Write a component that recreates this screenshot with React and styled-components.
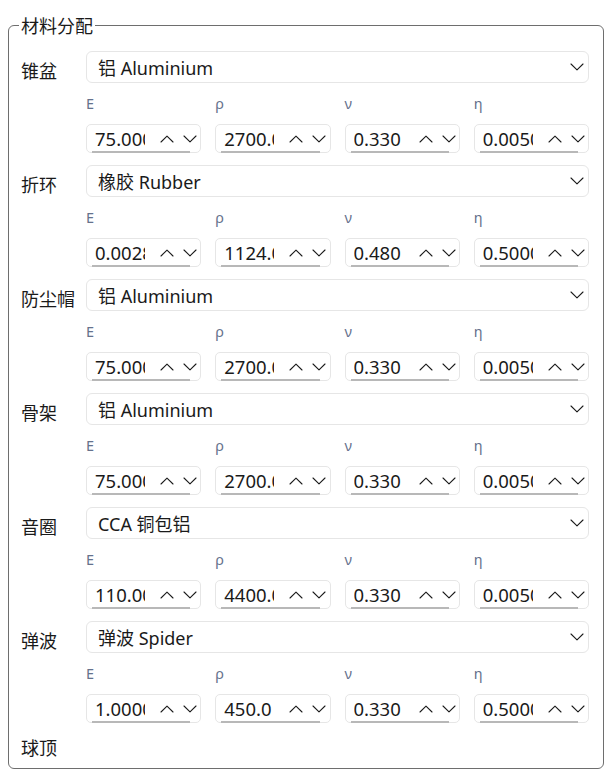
import styled, { createGlobalStyle } from 'styled-components';

const materials = [
  { part: '锥盆', name: '铝 Aluminium', values: ['75.000', '2700.0', '0.330', '0.0050'] },
  { part: '折环', name: '橡胶 Rubber', values: ['0.0028', '1124.0', '0.480', '0.5000'] },
  { part: '防尘帽', name: '铝 Aluminium', values: ['75.000', '2700.0', '0.330', '0.0050'] },
  { part: '骨架', name: '铝 Aluminium', values: ['75.000', '2700.0', '0.330', '0.0050'] },
  { part: '音圈', name: 'CCA 铜包铝', values: ['110.00', '4400.0', '0.330', '0.0050'] },
  { part: '弹波', name: '弹波 Spider', values: ['1.0000', '450.0', '0.330', '0.5000'] },
];

const params = ['E', 'ρ', 'ν', 'η'];

const Chevron = ({ up, width = 14 }) => (
  <svg width={width} height="8" viewBox="0 0 14 8" fill="none">
    <path
      d={up ? 'M1 7L7 1.2L13 7' : 'M1 1L7 6.8L13 1'}
      stroke="#1b1b1b"
      strokeWidth="1.1"
      strokeLinecap="round"
      strokeLinejoin="round"
    />
  </svg>
);

const MaterialsPanel = () => {
  return (
    <Page>
      <GlobalStyle />
      <GroupBox>
        <Legend>材料分配</Legend>
        <Form>
          {materials.map((m) => (
            <Row key={m.part}>
              <RowLabel>{m.part}</RowLabel>
              <Field>
                <Combo>
                  <span>{m.name}</span>
                  <Chevron />
                </Combo>
                <ParamGrid>
                  {params.map((p) => (
                    <ParamName key={p}>{p}</ParamName>
                  ))}
                </ParamGrid>
                <SpinGrid>
                  {m.values.map((v, i) => (
                    <Spin key={i}>
                      <SpinText>{v}</SpinText>
                      <SpinButtons>
                        <Chevron up width={14} />
                        <Chevron width={14} />
                      </SpinButtons>
                    </Spin>
                  ))}
                </SpinGrid>
              </Field>
            </Row>
          ))}
          <LastLabel>球顶</LastLabel>
        </Form>
      </GroupBox>
    </Page>
  );
};

const GlobalStyle = createGlobalStyle`
  html, body {
    margin: 0;
    background: #ffffff;
  }
  body {
    font-family: "Segoe UI", "Noto Sans", "Noto Sans CJK SC", sans-serif;
    color: #1a1a1a;
  }
`;

const Page = styled.div`
  padding: 15px 3px 6px 8px;
  height: 776px;
  box-sizing: border-box;
  overflow: hidden;
`;

const GroupBox = styled.fieldset`
  margin: 0;
  padding: 16px 14px 9px 12px;
  border: 1px solid #6e6e6e;
  border-radius: 6px;
  min-width: 0;
`;

const Legend = styled.legend`
  margin-left: -2px;
  padding: 0 2px;
  font-family: "Noto Sans CJK SC", sans-serif;
  font-size: 18px;
  line-height: 20px;
  color: #1a1a1a;
`;

const Form = styled.div`
  display: flex;
  flex-direction: column;
  gap: 12px;
`;

const Row = styled.div`
  display: grid;
  grid-template-columns: 65px 1fr;
`;

const RowLabel = styled.div`
  padding-top: 7px;
  font-family: "Noto Sans CJK SC", sans-serif;
  font-size: 18px;
  line-height: 24px;
`;

const LastLabel = styled(RowLabel)`
  padding-top: 0;
`;

const Field = styled.div`
  display: flex;
  flex-direction: column;
`;

const Combo = styled.div`
  height: 32px;
  box-sizing: border-box;
  border: 1px solid #e6e6e6;
  border-radius: 6px;
  display: flex;
  align-items: center;
  justify-content: space-between;
  padding: 0 4px 0 11px;
  font-size: 18px;
  background: #ffffff;
`;

const ParamGrid = styled.div`
  height: 41px;
  display: grid;
  grid-template-columns: repeat(4, 1fr);
  column-gap: 14px;
  align-items: center;
`;

const ParamName = styled.div`
  font-size: 14.5px;
  color: #65718c;
  padding-bottom: 2px;
`;

const SpinGrid = styled.div`
  display: grid;
  grid-template-columns: repeat(4, 1fr);
  column-gap: 14px;
`;

const Spin = styled.div`
  position: relative;
  height: 29px;
  box-sizing: border-box;
  border: 1px solid #e6e6e6;
  border-radius: 5px;
  display: flex;
  align-items: center;
  padding: 0 2px 0 8px;
  background: #ffffff;

  &::after {
    content: '';
    position: absolute;
    left: 5px;
    right: 10px;
    bottom: -1px;
    height: 2px;
    background: #b8b8b8;
  }
`;

const SpinText = styled.span`
  flex: none;
  width: 50px;
  margin-right: 15px;
  overflow: hidden;
  white-space: nowrap;
  font-size: 18.5px;
`;

const SpinButtons = styled.div`
  display: flex;
  gap: 9px;
  align-items: center;
`;

export default MaterialsPanel;
